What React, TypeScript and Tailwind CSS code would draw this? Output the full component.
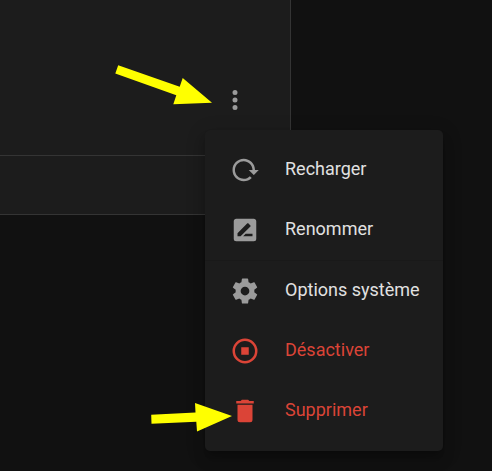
import React from "react";

const icons = {
  dots: "M12,16A2,2 0 0,1 14,18A2,2 0 0,1 12,20A2,2 0 0,1 10,18A2,2 0 0,1 12,16M12,10A2,2 0 0,1 14,12A2,2 0 0,1 12,14A2,2 0 0,1 10,12A2,2 0 0,1 12,10M12,4A2,2 0 0,1 14,6A2,2 0 0,1 12,8A2,2 0 0,1 10,6A2,2 0 0,1 12,4Z",
  reload:
    "M2 12C2 16.97 6.03 21 11 21C13.39 21 15.68 20.06 17.4 18.4L15.9 16.9C14.63 18.25 12.86 19 11 19C4.76 19 1.64 11.46 6.05 7.05C10.46 2.64 18 5.77 18 12H15L19 16H19.1L23 12H20C20 7.03 15.97 3 11 3C6.03 3 2 7.03 2 12Z",
  rename:
    "M18,17H10.5L12.5,15H18M6,17V14.5L13.88,6.65C14.07,6.45 14.39,6.45 14.59,6.65L16.35,8.41C16.55,8.61 16.55,8.92 16.35,9.12L8.47,17M19,3H5C3.89,3 3,3.89 3,5V19A2,2 0 0,0 5,21H19A2,2 0 0,0 21,19V5C21,3.89 20.1,3 19,3Z",
  cog: "M12,15.5A3.5,3.5 0 0,1 8.5,12A3.5,3.5 0 0,1 12,8.5A3.5,3.5 0 0,1 15.5,12A3.5,3.5 0 0,1 12,15.5M19.43,12.97C19.47,12.65 19.5,12.33 19.5,12C19.5,11.67 19.47,11.34 19.43,11L21.54,9.37C21.73,9.22 21.78,8.95 21.66,8.73L19.66,5.27C19.54,5.05 19.27,4.96 19.05,5.05L16.56,6.05C16.04,5.66 15.5,5.32 14.87,5.07L14.5,2.42C14.46,2.18 14.25,2 14,2H10C9.75,2 9.54,2.18 9.5,2.42L9.13,5.07C8.5,5.32 7.96,5.66 7.44,6.05L4.95,5.05C4.73,4.96 4.46,5.05 4.34,5.27L2.34,8.73C2.21,8.95 2.27,9.22 2.46,9.37L4.57,11C4.53,11.34 4.5,11.67 4.5,12C4.5,12.33 4.53,12.65 4.57,12.97L2.46,14.63C2.27,14.78 2.21,15.05 2.34,15.27L4.34,18.73C4.46,18.95 4.73,19.03 4.95,18.95L7.44,17.94C7.96,18.34 8.5,18.68 9.13,18.93L9.5,21.58C9.54,21.82 9.75,22 10,22H14C14.25,22 14.46,21.82 14.5,21.58L14.87,18.93C15.5,18.67 16.04,18.34 16.56,17.94L19.05,18.95C19.27,19.03 19.54,18.95 19.66,18.73L21.66,15.27C21.78,15.05 21.73,14.78 21.54,14.63L19.43,12.97Z",
  stop: "M12,2A10,10 0 0,0 2,12A10,10 0 0,0 12,22A10,10 0 0,0 22,12A10,10 0 0,0 12,2M12,4C16.41,4 20,7.59 20,12C20,16.41 16.41,20 12,20C7.59,20 4,16.41 4,12C4,7.59 7.59,4 12,4M9,9V15H15V9",
  trash:
    "M19,4H15.5L14.5,3H9.5L8.5,4H5V6H19M6,19A2,2 0 0,0 8,21H16A2,2 0 0,0 18,19V7H6V19Z",
};

function Icon({ name }: { name: keyof typeof icons }) {
  return (
    <svg
      viewBox="0 0 24 24"
      className="size-[30px] shrink-0"
      fill="currentColor"
      fillRule={name === "stop" ? "evenodd" : "nonzero"}
      aria-hidden="true"
    >
      <path d={icons[name]} />
    </svg>
  );
}

type ItemProps = {
  icon: keyof typeof icons;
  label: string;
  danger?: boolean;
};

function MenuItem({ icon, label, danger = false }: ItemProps) {
  return (
    <button
      type="button"
      role="menuitem"
      className={
        danger
          ? "flex h-[60px] w-full items-center gap-[25px] px-[25px] text-left text-[#db4437]"
          : "flex h-[60px] w-full items-center gap-[25px] px-[25px] text-left text-[#e1e1e1]"
      }
    >
      <span className={danger ? "text-[#db4437]" : "text-[#9b9b9b]"}>
        <Icon name={icon} />
      </span>
      <span className="whitespace-nowrap pb-0.5 text-lg">{label}</span>
    </button>
  );
}

export default function App() {
  return (
    <main className="relative min-h-screen overflow-hidden bg-[#111111] font-['Roboto',sans-serif]">
      <section className="mr-[201px] border-r border-b border-[#343434] bg-[#1c1c1c]">
        <header className="flex justify-end border-b border-[#343434] px-10 pt-[85px] pb-10">
          <div className="relative">
            <button
              type="button"
              aria-label="Menu"
              aria-haspopup="menu"
              aria-expanded="true"
              className="block text-[#9b9b9b]"
            >
              <Icon name="dots" />
            </button>
            <div
              role="menu"
              className="absolute top-[45px] -left-[15px] z-10 w-[238px] rounded-[5px] bg-[#1c1c1c] py-[10px] shadow-[0_6px_6px_-4px_rgba(0,0,0,0.2),0_10px_12px_1px_rgba(0,0,0,0.14),0_4px_18px_3px_rgba(0,0,0,0.12)]"
            >
              <MenuItem icon="reload" label="Recharger" />
              <MenuItem icon="rename" label="Renommer" />
              <hr className="border-t border-[#191919]" />
              <MenuItem icon="cog" label="Options système" />
              <MenuItem icon="stop" label="Désactiver" danger />
              <MenuItem icon="trash" label="Supprimer" danger />
            </div>
          </div>
        </header>
        <div className="h-[58px]" />
      </section>

      <svg
        viewBox="0 0 98 40"
        className="pointer-events-none absolute top-[65px] left-[115px] z-20 h-10 w-[98px]"
        fill="#ffff00"
        aria-hidden="true"
      >
        <path d="M3.2 0.2L64.7 21.7L67.7 13L97 37.7L58.3 39.3L61.3 30.3L0.3 8.5Z" />
      </svg>
      <svg
        viewBox="0 0 82 30"
        className="pointer-events-none absolute top-[402px] left-[151px] z-20 h-[30px] w-[82px]"
        fill="#ffff00"
        aria-hidden="true"
      >
        <path d="M0.2 12.7L44.5 10.4L44 1L81 14L46 29.5L45.3 19.7L0.5 21.8Z" />
      </svg>
    </main>
  );
}
